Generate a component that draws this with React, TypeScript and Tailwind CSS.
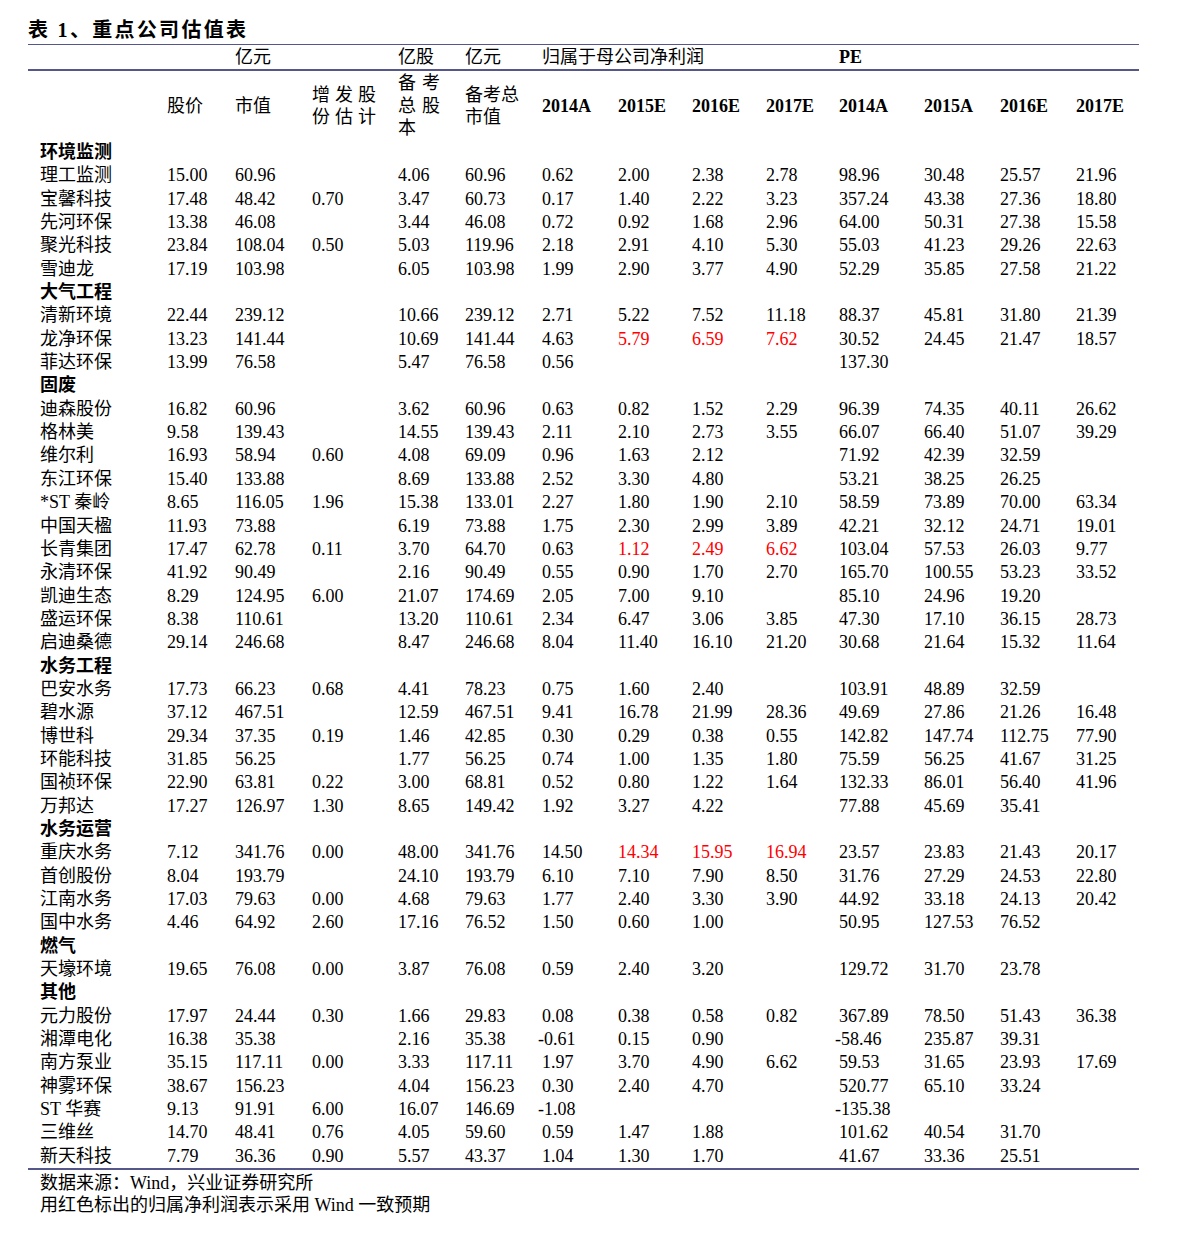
import React from "react"

const COLS =
  "grid grid-cols-[139px_68px_77px_86px_67px_77px_76px_74px_74px_73px_85px_76px_76px_63px]"

type Row = { cat: string } | { name: string; v: string[] }

// "!" marks a Wind consensus forecast (drawn red)
const rows: Row[] = [
  { cat: "环境监测" },
  { name: "理工监测", v: ["15.00", "60.96", "", "4.06", "60.96", "0.62", "2.00", "2.38", "2.78", "98.96", "30.48", "25.57", "21.96"] },
  { name: "宝馨科技", v: ["17.48", "48.42", "0.70", "3.47", "60.73", "0.17", "1.40", "2.22", "3.23", "357.24", "43.38", "27.36", "18.80"] },
  { name: "先河环保", v: ["13.38", "46.08", "", "3.44", "46.08", "0.72", "0.92", "1.68", "2.96", "64.00", "50.31", "27.38", "15.58"] },
  { name: "聚光科技", v: ["23.84", "108.04", "0.50", "5.03", "119.96", "2.18", "2.91", "4.10", "5.30", "55.03", "41.23", "29.26", "22.63"] },
  { name: "雪迪龙", v: ["17.19", "103.98", "", "6.05", "103.98", "1.99", "2.90", "3.77", "4.90", "52.29", "35.85", "27.58", "21.22"] },
  { cat: "大气工程" },
  { name: "清新环境", v: ["22.44", "239.12", "", "10.66", "239.12", "2.71", "5.22", "7.52", "11.18", "88.37", "45.81", "31.80", "21.39"] },
  { name: "龙净环保", v: ["13.23", "141.44", "", "10.69", "141.44", "4.63", "!5.79", "!6.59", "!7.62", "30.52", "24.45", "21.47", "18.57"] },
  { name: "菲达环保", v: ["13.99", "76.58", "", "5.47", "76.58", "0.56", "", "", "", "137.30", "", "", ""] },
  { cat: "固废" },
  { name: "迪森股份", v: ["16.82", "60.96", "", "3.62", "60.96", "0.63", "0.82", "1.52", "2.29", "96.39", "74.35", "40.11", "26.62"] },
  { name: "格林美", v: ["9.58", "139.43", "", "14.55", "139.43", "2.11", "2.10", "2.73", "3.55", "66.07", "66.40", "51.07", "39.29"] },
  { name: "维尔利", v: ["16.93", "58.94", "0.60", "4.08", "69.09", "0.96", "1.63", "2.12", "", "71.92", "42.39", "32.59", ""] },
  { name: "东江环保", v: ["15.40", "133.88", "", "8.69", "133.88", "2.52", "3.30", "4.80", "", "53.21", "38.25", "26.25", ""] },
  { name: "*ST 秦岭", v: ["8.65", "116.05", "1.96", "15.38", "133.01", "2.27", "1.80", "1.90", "2.10", "58.59", "73.89", "70.00", "63.34"] },
  { name: "中国天楹", v: ["11.93", "73.88", "", "6.19", "73.88", "1.75", "2.30", "2.99", "3.89", "42.21", "32.12", "24.71", "19.01"] },
  { name: "长青集团", v: ["17.47", "62.78", "0.11", "3.70", "64.70", "0.63", "!1.12", "!2.49", "!6.62", "103.04", "57.53", "26.03", "9.77"] },
  { name: "永清环保", v: ["41.92", "90.49", "", "2.16", "90.49", "0.55", "0.90", "1.70", "2.70", "165.70", "100.55", "53.23", "33.52"] },
  { name: "凯迪生态", v: ["8.29", "124.95", "6.00", "21.07", "174.69", "2.05", "7.00", "9.10", "", "85.10", "24.96", "19.20", ""] },
  { name: "盛运环保", v: ["8.38", "110.61", "", "13.20", "110.61", "2.34", "6.47", "3.06", "3.85", "47.30", "17.10", "36.15", "28.73"] },
  { name: "启迪桑德", v: ["29.14", "246.68", "", "8.47", "246.68", "8.04", "11.40", "16.10", "21.20", "30.68", "21.64", "15.32", "11.64"] },
  { cat: "水务工程" },
  { name: "巴安水务", v: ["17.73", "66.23", "0.68", "4.41", "78.23", "0.75", "1.60", "2.40", "", "103.91", "48.89", "32.59", ""] },
  { name: "碧水源", v: ["37.12", "467.51", "", "12.59", "467.51", "9.41", "16.78", "21.99", "28.36", "49.69", "27.86", "21.26", "16.48"] },
  { name: "博世科", v: ["29.34", "37.35", "0.19", "1.46", "42.85", "0.30", "0.29", "0.38", "0.55", "142.82", "147.74", "112.75", "77.90"] },
  { name: "环能科技", v: ["31.85", "56.25", "", "1.77", "56.25", "0.74", "1.00", "1.35", "1.80", "75.59", "56.25", "41.67", "31.25"] },
  { name: "国祯环保", v: ["22.90", "63.81", "0.22", "3.00", "68.81", "0.52", "0.80", "1.22", "1.64", "132.33", "86.01", "56.40", "41.96"] },
  { name: "万邦达", v: ["17.27", "126.97", "1.30", "8.65", "149.42", "1.92", "3.27", "4.22", "", "77.88", "45.69", "35.41", ""] },
  { cat: "水务运营" },
  { name: "重庆水务", v: ["7.12", "341.76", "0.00", "48.00", "341.76", "14.50", "!14.34", "!15.95", "!16.94", "23.57", "23.83", "21.43", "20.17"] },
  { name: "首创股份", v: ["8.04", "193.79", "", "24.10", "193.79", "6.10", "7.10", "7.90", "8.50", "31.76", "27.29", "24.53", "22.80"] },
  { name: "江南水务", v: ["17.03", "79.63", "0.00", "4.68", "79.63", "1.77", "2.40", "3.30", "3.90", "44.92", "33.18", "24.13", "20.42"] },
  { name: "国中水务", v: ["4.46", "64.92", "2.60", "17.16", "76.52", "1.50", "0.60", "1.00", "", "50.95", "127.53", "76.52", ""] },
  { cat: "燃气" },
  { name: "天壕环境", v: ["19.65", "76.08", "0.00", "3.87", "76.08", "0.59", "2.40", "3.20", "", "129.72", "31.70", "23.78", ""] },
  { cat: "其他" },
  { name: "元力股份", v: ["17.97", "24.44", "0.30", "1.66", "29.83", "0.08", "0.38", "0.58", "0.82", "367.89", "78.50", "51.43", "36.38"] },
  { name: "湘潭电化", v: ["16.38", "35.38", "", "2.16", "35.38", "-0.61", "0.15", "0.90", "", "-58.46", "235.87", "39.31", ""] },
  { name: "南方泵业", v: ["35.15", "117.11", "0.00", "3.33", "117.11", "1.97", "3.70", "4.90", "6.62", "59.53", "31.65", "23.93", "17.69"] },
  { name: "神雾环保", v: ["38.67", "156.23", "", "4.04", "156.23", "0.30", "2.40", "4.70", "", "520.77", "65.10", "33.24", ""] },
  { name: "ST 华赛", v: ["9.13", "91.91", "6.00", "16.07", "146.69", "-1.08", "", "", "", "-135.38", "", "", ""] },
  { name: "三维丝", v: ["14.70", "48.41", "0.76", "4.05", "59.60", "0.59", "1.47", "1.88", "", "101.62", "40.54", "31.70", ""] },
  { name: "新天科技", v: ["7.79", "36.36", "0.90", "5.57", "43.37", "1.04", "1.30", "1.70", "", "41.67", "33.36", "25.51", ""] },
]

const years = ["2014A", "2015E", "2016E", "2017E", "2014A", "2015A", "2016E", "2017E"]

export default function App() {
  return (
    <div
      className="bg-white text-black min-h-[1235px] pl-[28px] text-[18px]"
      style={{ fontFamily: '"Liberation Serif", "Noto Sans CJK SC", serif' }}
    >
      <div className="w-[1111px]">
        <div className="pt-[18px] pb-[2px] leading-[24px] text-[20px] font-bold tracking-[2.3px] whitespace-pre">
          表 1、重点公司估值表
        </div>

        {/* unit row */}
        <div className={`${COLS} h-[27px] items-center border-t border-b-2 border-[#55578a] leading-[22px]`}>
          <div />
          <div />
          <div>亿元</div>
          <div />
          <div>亿股</div>
          <div>亿元</div>
          <div className="col-span-4">归属于母公司净利润</div>
          <div className="col-span-4 font-bold">PE</div>
        </div>

        {/* column titles */}
        <div className={`${COLS} h-[70px] items-center leading-[22.5px]`}>
          <div />
          <div>股价</div>
          <div>市值</div>
          <div className="tracking-[5px]">
            <div>增发股</div>
            <div>份估计</div>
          </div>
          <div>
            <div className="tracking-[6px]">备考</div>
            <div className="tracking-[6px]">总股</div>
            <div>本</div>
          </div>
          <div>
            <div>备考总</div>
            <div>市值</div>
          </div>
          {years.map((y, i) => (
            <div key={i} className="font-bold">
              {y}
            </div>
          ))}
        </div>

        <div className="border-b-2 border-[#55578a]">
          {rows.map((r, i) =>
            "cat" in r ? (
              <div key={i} className="h-[23.35px] leading-[23.35px] pl-[12px] font-bold">
                {r.cat}
              </div>
            ) : (
              <div key={i} className={`${COLS} h-[23.35px] leading-[23.35px]`}>
                <div className="pl-[12px] whitespace-nowrap">{r.name}</div>
                {r.v.map((c, j) =>
                  c.startsWith("!") ? (
                    <div key={j} className="text-[#ff0000]">
                      {c.slice(1)}
                    </div>
                  ) : (
                    <div key={j} className={c.startsWith("-") ? "-ml-[4px]" : ""}>
                      {c}
                    </div>
                  )
                )}
              </div>
            )
          )}
        </div>

        <div className="pl-[12px] pt-[2px] text-[18px] leading-[22px]">
          <div>数据来源：Wind，兴业证券研究所</div>
          <div>用红色标出的归属净利润表示采用 Wind 一致预期</div>
        </div>
      </div>
    </div>
  )
}
